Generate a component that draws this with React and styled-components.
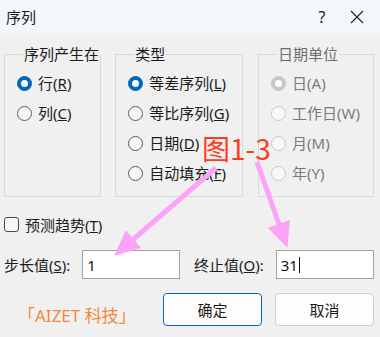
import styled, { createGlobalStyle } from "styled-components";

const GlobalStyle = createGlobalStyle`
  html, body { margin: 0; padding: 0; background: #f0f0f0; }
  body {
    font-family: "Noto Sans", "Noto Sans CJK SC", sans-serif;
    color: #1b1b1b;
  }
`;

const Window = styled.div`
  position: relative;
  width: 380px;
  height: 337px;
  background: #f0f0f0;
  overflow: hidden;
  font-size: 15px;
  display: flex;
  flex-direction: column;
`;

const TitleBar = styled.div`
  height: 33px;
  background: #f3f6fa;
  display: flex;
  align-items: center;
  padding-left: 6px;
  & h1 {
    flex: 1;
    margin: 0;
    font-size: 15px;
    font-weight: normal;
  }
`;

const TitleButton = styled.div`
  width: ${(p) => p.$w || 46}px;
  height: 33px;
  display: flex;
  align-items: center;
  justify-content: center;
  font-size: 16px;
  color: #222;
`;

const Body = styled.div`
  flex: 1;
  padding: 12px 6px 0 4px;
  display: flex;
  flex-direction: column;
`;

const Groups = styled.div`
  display: flex;
  gap: 14px;
  height: 152px;
`;

const Group = styled.fieldset`
  margin: 0 0 0 ${(p) => p.$ml || 0}px;
  width: ${(p) => p.$w}px;
  box-sizing: border-box;
  border: 1px solid #d9d9d9;
  padding: 5px 0 0 12px;
  display: flex;
  flex-direction: column;
  & legend {
    margin-left: 6px;
    padding: 0 1px;
    line-height: 18px;
    color: ${(p) => (p.$disabled ? "#6e6e6e" : "#1b1b1b")};
  }
`;

const Option = styled.label`
  display: flex;
  align-items: center;
  gap: 6px;
  height: 30px;
  flex: none;
  line-height: 30px;
  color: ${(p) => (p.$disabled ? "#7a7a7a" : "#1b1b1b")};
`;

const RadioDot = styled.span`
  width: 15px;
  height: 15px;
  box-sizing: border-box;
  border-radius: 50%;
  flex: none;
  position: relative;
  border: 1px solid ${(p) =>
    p.$checked ? (p.$disabled ? "#c6c6c6" : "#0067c0") : p.$disabled ? "#c9c9c9" : "#5c5c5c"};
  background: ${(p) =>
    p.$checked ? (p.$disabled ? "#c6c6c6" : "#0067c0") : p.$disabled ? "#f8f8f8" : "#f6f6f6"};
  &::after {
    content: "";
    display: ${(p) => (p.$checked ? "block" : "none")};
    position: absolute;
    left: 50%;
    top: 50%;
    width: 7px;
    height: 7px;
    margin: -3.5px 0 0 -3.5px;
    border-radius: 50%;
    background: #fff;
  }
`;

const CheckRow = styled.label`
  display: flex;
  align-items: center;
  gap: 6px;
  margin-top: 17px;
  height: 20px;
`;

const CheckBox = styled.span`
  width: 15px;
  height: 15px;
  box-sizing: border-box;
  border: 1px solid #4a4a4a;
  border-radius: 3px;
  background: #f6f6f6;
`;

const FieldRow = styled.div`
  display: flex;
  align-items: center;
  margin-top: 16px;
  height: 29px;
`;

const Field = styled.label`
  display: flex;
  align-items: center;
  width: ${(p) => p.$w}px;
  gap: ${(p) => p.$gap}px;
`;

const InputBox = styled.div`
  width: 98px;
  height: 29px;
  box-sizing: border-box;
  border: 1px solid #a2a2a2;
  background: #fff;
  display: flex;
  align-items: center;
  padding-left: 4px;
  font-size: 15px;
  color: #111;
`;

const Caret = styled.span`
  width: 1px;
  height: 16px;
  background: #111;
  margin-left: 1px;
`;

const ButtonRow = styled.div`
  display: flex;
  align-items: center;
  margin-top: 14px;
  height: 33px;
`;

const Brand = styled.div`
  flex: 1;
  padding: 10px 0 0 14px;
  font-size: 17px;
  color: #f5873d;
`;

const Button = styled.button`
  width: 99px;
  height: 33px;
  margin-left: ${(p) => p.$ml || 0}px;
  box-sizing: border-box;
  border-radius: 4px;
  border: 1px solid ${(p) => (p.$primary ? "#0067c0" : "#d0d0d0")};
  background: #fdfdfd;
  font-family: inherit;
  font-size: 15px;
  color: #1b1b1b;
  padding: 0;
`;

const Overlay = styled.svg`
  position: absolute;
  left: 0;
  top: 0;
  pointer-events: none;
`;

const Annotation = styled.div`
  position: absolute;
  left: 202px;
  top: 130px;
  font-size: 28px;
  line-height: 36px;
  color: #ff3b1f;
  font-family: "Noto Sans CJK SC", sans-serif;
`;

function Radio({ label, keyChar, checked, disabled }) {
  return (
    <Option $disabled={disabled}>
      <RadioDot $checked={checked} $disabled={disabled} />
      <span>
        {label}(
        {disabled ? keyChar : <u>{keyChar}</u>})
      </span>
    </Option>
  );
}

// pink annotation arrows: a thick shaft plus a triangular head
function arrow(x1, y1, x2, y2, head = 24, half = 11) {
  const dx = x2 - x1;
  const dy = y2 - y1;
  const len = Math.hypot(dx, dy);
  const ux = dx / len;
  const uy = dy / len;
  const bx = x2 - ux * head;
  const by = y2 - uy * head;
  const px = -uy;
  const py = ux;
  return {
    line: [x1, y1, bx + ux * 2, by + uy * 2],
    head: `${x2},${y2} ${bx + px * half},${by + py * half} ${bx - px * half},${by - py * half}`,
  };
}

export default function App() {
  const a1 = arrow(216, 168, 115, 255);
  const a2 = arrow(257, 162, 287, 247);
  return (
    <Window>
      <GlobalStyle />
      <TitleBar>
        <h1>序列</h1>
        <TitleButton $w={24}>?</TitleButton>
        <TitleButton $w={46}>
          <svg width="14" height="14" viewBox="0 0 14 14">
            <path d="M1 1 L13 13 M13 1 L1 13" stroke="#222" strokeWidth="1.1" />
          </svg>
        </TitleButton>
      </TitleBar>
      <Body>
        <Groups>
          <Group $w={98}>
            <legend>序列产生在</legend>
            <Radio label="行" keyChar="R" checked />
            <Radio label="列" keyChar="C" />
          </Group>
          <Group $w={129}>
            <legend>类型</legend>
            <Radio label="等差序列" keyChar="L" checked />
            <Radio label="等比序列" keyChar="G" />
            <Radio label="日期" keyChar="D" />
            <Radio label="自动填充" keyChar="F" />
          </Group>
          <Group $w={117} $ml={1} $disabled>
            <legend>日期单位</legend>
            <Radio label="日" keyChar="A" checked disabled />
            <Radio label="工作日" keyChar="W" disabled />
            <Radio label="月" keyChar="M" disabled />
            <Radio label="年" keyChar="Y" disabled />
          </Group>
        </Groups>
        <CheckRow>
          <CheckBox />
          <span>
            预测趋势(<u>T</u>)
          </span>
        </CheckRow>
        <FieldRow>
          <Field $w={191} $gap={12}>
            <span>
              步长值(<u>S</u>):
            </span>
            <InputBox>1</InputBox>
          </Field>
          <Field $w={181} $gap={12}>
            <span>
              终止值(<u>O</u>):
            </span>
            <InputBox>
              31
              <Caret />
            </InputBox>
          </Field>
        </FieldRow>
        <ButtonRow>
          <Brand>「AIZET 科技」</Brand>
          <Button $primary>确定</Button>
          <Button $ml={13}>取消</Button>
        </ButtonRow>
      </Body>
      <Annotation>图1-3</Annotation>
      <Overlay width="380" height="337">
        {[a1, a2].map((a, i) => (
          <g key={i} fill="#fba3f6" stroke="#fba3f6">
            <line
              x1={a.line[0]}
              y1={a.line[1]}
              x2={a.line[2]}
              y2={a.line[3]}
              strokeWidth="5"
            />
            <polygon points={a.head} strokeWidth="1" strokeLinejoin="round" />
          </g>
        ))}
      </Overlay>
    </Window>
  );
}
